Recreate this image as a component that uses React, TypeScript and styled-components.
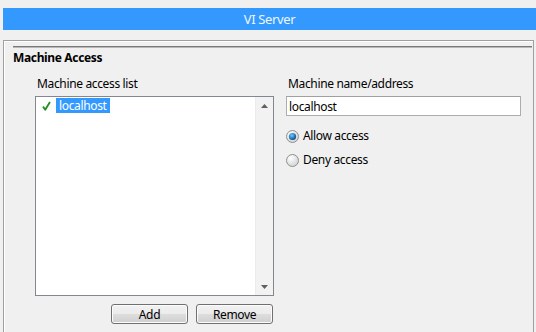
import * as React from "react";
import styled, { createGlobalStyle } from "styled-components";

const GlobalStyle = createGlobalStyle`
  html, body {
    margin: 0;
    background: #f0f0f0;
  }
  body {
    font-family: "Noto Sans", "Liberation Sans", sans-serif;
    font-size: 12px;
    letter-spacing: -0.35px;
    color: #000;
  }
`;

const Window = styled.div`
  box-sizing: border-box;
  height: 332px;
  overflow: hidden;
  padding: 8px 0 0 3px;
`;

const TitleBar = styled.div`
  height: 22px;
  background: #3399ff;
  color: #eef6ff;
  font-size: 13px;
  line-height: 22px;
  text-align: center;
`;

const Panel = styled.div`
  box-sizing: border-box;
  width: 531px;
  height: 300px;
  margin-top: 10px;
  border: 1px solid #a0a0a0;
  border-bottom: none;
  box-shadow: inset 1px 1px 0 #ffffff;
`;

const Separator = styled.div`
  height: 0;
  margin: 5px 1px 0 9px;
  border-top: 1px solid #7a7a7a;
  border-bottom: 1px solid #b8b8b8;
`;

const SectionTitle = styled.div`
  margin: 2px 0 0 9px;
  font-weight: 700;
  line-height: 16px;
`;

const Body = styled.div`
  display: flex;
  gap: 12px;
  margin: 10px 0 0 31px;
`;

const Column = styled.div<{ $width: number }>`
  display: flex;
  flex-direction: column;
  width: ${(p) => p.$width}px;
`;

const Label = styled.div`
  padding-left: 2px;
  line-height: 16px;
  margin-bottom: 4px;
`;

const ListBox = styled.div`
  box-sizing: border-box;
  display: flex;
  height: 200px;
  border: 1px solid #828790;
  background: #ffffff;
`;

const ListItems = styled.div`
  flex: 1;
  padding-top: 1px;
`;

const ListRow = styled.div`
  display: flex;
  align-items: center;
  height: 15px;
  padding-left: 6px;
  gap: 5px;
`;

const Selected = styled.span`
  padding: 0 3px;
  height: 15px;
  line-height: 15px;
  background: #3399ff;
  color: #ffffff;
`;

const ScrollBar = styled.div`
  width: 17px;
  display: flex;
  flex-direction: column;
  justify-content: space-between;
  background: #f2f2f2;
  border-left: 1px solid #ececec;
`;

const ArrowButton = styled.div`
  height: 17px;
  display: flex;
  align-items: center;
  justify-content: center;
`;

const ButtonRow = styled.div`
  display: flex;
  justify-content: flex-end;
  gap: 8px;
  margin-top: 8px;
  padding-right: 1px;
`;

const Button = styled.button`
  box-sizing: border-box;
  width: 77px;
  height: 20px;
  padding: 0;
  border: 1px solid #707070;
  border-radius: 3px;
  background: linear-gradient(#f2f2f2 0%, #ebebeb 50%, #dddddd 51%, #cfcfcf 100%);
  box-shadow: inset 0 0 0 1px #fcfcfc;
  font: inherit;
  letter-spacing: inherit;
  color: #000;
`;

const TextInput = styled.input`
  box-sizing: border-box;
  width: 235px;
  height: 20px;
  margin: 0;
  padding: 0 2px;
  border: 1px solid #abadb3;
  border-top-color: #a0a0a0;
  background: #ffffff;
  font: inherit;
  letter-spacing: inherit;
  color: #000;
  outline: none;
`;

const RadioGroup = styled.div`
  display: flex;
  flex-direction: column;
  gap: 8px;
  margin-top: 12px;
`;

const RadioRow = styled.label`
  display: flex;
  align-items: center;
  gap: 4px;
  height: 16px;
  line-height: 16px;
`;

const Check = () => (
  <svg width="9" height="10" viewBox="0 0 9 10">
    <path d="M1 5.5 L3.2 8.8 L8 1" fill="none" stroke="#1f8f1f" strokeWidth="1.8" strokeLinejoin="round" />
  </svg>
);

const Arrow = ({ down }: { down?: boolean }) => (
  <svg width="7" height="4" viewBox="0 0 7 4">
    <path d={down ? "M0 0 H7 L3.5 4 Z" : "M0 4 H7 L3.5 0 Z"} fill="#606060" />
  </svg>
);

const Radio = ({ checked, id }: { checked?: boolean; id: string }) => (
  <svg width="13" height="13" viewBox="0 0 13 13">
    <defs>
      <radialGradient id={`bg-${id}`} cx="0.35" cy="0.3" r="0.8">
        <stop offset="0" stopColor="#ffffff" />
        <stop offset="1" stopColor="#cfcfcf" />
      </radialGradient>
      <radialGradient id={`dot-${id}`} cx="0.4" cy="0.35" r="0.7">
        <stop offset="0" stopColor="#7cc6f6" />
        <stop offset="0.5" stopColor="#2f8ad2" />
        <stop offset="1" stopColor="#0f3e66" />
      </radialGradient>
    </defs>
    <circle cx="6.5" cy="6.5" r="6" fill={`url(#bg-${id})`} stroke="#8e8f8f" />
    {checked && <circle cx="6.5" cy="6.5" r="3.6" fill={`url(#dot-${id})`} />}
  </svg>
);

export default function App() {
  const [access, setAccess] = React.useState("allow");

  return (
    <>
      <GlobalStyle />
      <Window>
        <TitleBar>VI Server</TitleBar>
        <Panel>
          <Separator />
          <SectionTitle>Machine Access</SectionTitle>
          <Body>
            <Column $width={239}>
              <Label>Machine access list</Label>
              <ListBox>
                <ListItems>
                  <ListRow>
                    <Check />
                    <Selected>localhost</Selected>
                  </ListRow>
                </ListItems>
                <ScrollBar>
                  <ArrowButton>
                    <Arrow />
                  </ArrowButton>
                  <ArrowButton>
                    <Arrow down />
                  </ArrowButton>
                </ScrollBar>
              </ListBox>
              <ButtonRow>
                <Button type="button">Add</Button>
                <Button type="button">Remove</Button>
              </ButtonRow>
            </Column>
            <Column $width={235}>
              <Label>Machine name/address</Label>
              <TextInput defaultValue="localhost" />
              <RadioGroup>
                <RadioRow onClick={() => setAccess("allow")}>
                  <Radio id="allow" checked={access === "allow"} />
                  Allow access
                </RadioRow>
                <RadioRow onClick={() => setAccess("deny")}>
                  <Radio id="deny" checked={access === "deny"} />
                  Deny access
                </RadioRow>
              </RadioGroup>
            </Column>
          </Body>
        </Panel>
      </Window>
    </>
  );
}
